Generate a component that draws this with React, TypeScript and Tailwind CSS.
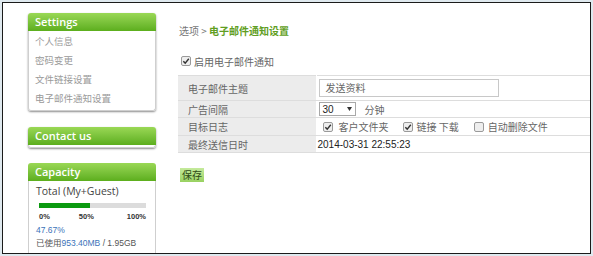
import React from "react";

const cjk = { fontFamily: '"Noto Sans CJK SC", "Liberation Sans", sans-serif' };
const arial = { fontFamily: '"Liberation Sans", "Noto Sans CJK SC", sans-serif' };
const head = { fontFamily: '"Open Sans", "Liberation Sans", sans-serif' };

function Box({ checked }: { checked: boolean }) {
  return (
    <svg width="10" height="10" viewBox="0 0 10 10" className="shrink-0">
      <rect x="0.5" y="0.5" width="9" height="9" rx="1.5" fill="#eeeeee" stroke="#9a9a9a" />
      {checked && <path d="M2.3 5.2 L4.2 7.1 L7.8 2.8" fill="none" stroke="#333" strokeWidth="1.4" />}
    </svg>
  );
}

function Header({ title }: { title: string }) {
  return (
    <div
      className="h-[18px] rounded-t-[3px] bg-gradient-to-b from-[#9ad855] to-[#5cae1c] text-white font-semibold text-[11px] leading-[18px] pl-[7px]"
      style={head}
    >
      {title}
    </div>
  );
}

export default function App() {
  return (
    <div className="w-[593px] h-[256px] bg-[#dfe9ef] p-[2px]">
      <div className="h-full border border-[#1b1b1b] bg-white flex overflow-hidden">
        <aside className="w-[128px] ml-[25px] mt-[10px] flex flex-col shrink-0">
          <div className="rounded-[3px] shadow-[0_1px_2px_rgba(0,0,0,0.45)]">
            <Header title="Settings" />
            <div className="border-x border-b border-[#cfcfcf] rounded-b-[3px] pt-px pb-[2px] bg-white" style={cjk}>
              {["个人信息", "密码变更", "文件链接设置", "电子邮件通知设置"].map((t) => (
                <div key={t} className="h-[19px] leading-[19px] pl-[6px] text-[9.5px] text-[#9a9a9a]">
                  {t}
                </div>
              ))}
            </div>
          </div>
          <div className="mt-[16px] rounded-[3px] shadow-[0_1px_2px_rgba(0,0,0,0.45)]">
            <Header title="Contact us" />
            <div className="h-[3px] border-x border-b border-[#cfcfcf] rounded-b-[3px] bg-white" />
          </div>
          <div className="mt-[15px] flex-1 flex flex-col">
            <Header title="Capacity" />
            <div className="flex-1 border-x border-[#cfcfcf] bg-white pl-[7px]">
              <div className="pt-[3px] leading-[14px] text-[10.5px] text-[#444] font-medium" style={head}>
                Total (My+Guest)
              </div>
              <div className="ml-[3px] mt-[5px] w-[107px] h-[5px] bg-[#dcdcdc] flex">
                <div className="h-full bg-[#0b9a10]" style={{ width: "47.67%" }} />
              </div>
              <div className="ml-[3px] mt-[4px] w-[107px] flex justify-between text-[7.5px] leading-[10px] font-bold text-[#333]" style={arial}>
                <span>0%</span>
                <span className="pr-[4px]">50%</span>
                <span>100%</span>
              </div>
              <div className="mt-[2px] text-[8.5px] leading-[12px] text-[#3b73b9]" style={arial}>
                47.67%
              </div>
              <div className="text-[8.5px] leading-[12px] text-[#555]" style={arial}>
                <span style={cjk}>已使用</span>
                <span className="text-[#3b73b9]">953.40MB</span> / 1.95GB
              </div>
            </div>
          </div>
        </aside>
        <main className="flex-1 ml-[22px] pt-[21px] flex flex-col items-start">
          <div className="text-[10px] leading-[14px] pl-px" style={cjk}>
            <span className="text-[#777]">选项 &gt; </span>
            <span className="text-[#5f9e22] font-bold">电子邮件通知设置</span>
          </div>
          <div className="mt-[16px] h-[14px] flex items-center gap-[3px] pl-[3px] text-[10px] text-[#666]" style={cjk}>
            <Box checked />
            <span>启用电子邮件通知</span>
          </div>
          <table className="mt-[7px] w-full border-collapse text-[10px] text-[#666]" style={cjk}>
            <tbody>
              <tr className="h-[25px]">
                <td className="w-[138px] bg-[#ececec] border-y border-[#dddddd] pl-[10px] border-r border-r-white">电子邮件主题</td>
                <td className="border-y border-[#dddddd] pl-[2px]">
                  <div className="w-[180px] h-[18px] border border-[#c8c8c8] leading-[16px] pl-[6px]">发送资料</div>
                </td>
              </tr>
              <tr className="h-[17px]">
                <td className="bg-[#ececec] border-y border-[#dddddd] pl-[10px] border-r border-r-white">广告间隔</td>
                <td className="border-y border-[#dddddd] pl-[2px]">
                  <div className="flex items-center">
                    <div className="w-[37px] h-[14px] border border-[#a8a8a8] flex items-center justify-between px-[3px] text-[#222]" style={arial}>
                      <span>30</span>
                      <svg width="5" height="4" viewBox="0 0 5 4">
                        <path d="M0 0 L5 0 L2.5 4 Z" fill="#333" />
                      </svg>
                    </div>
                    <span className="ml-[9px]">分钟</span>
                  </div>
                </td>
              </tr>
              <tr className="h-[18px]">
                <td className="bg-[#ececec] border-y border-[#dddddd] pl-[10px] border-r border-r-white">目标日志</td>
                <td className="border-y border-[#dddddd] pl-[6px]">
                  <div className="flex items-center">
                    <Box checked />
                    <span className="ml-[6px]">客户文件夹</span>
                    <span className="ml-[14px]"><Box checked /></span>
                    <span className="ml-[4px]">链接 下载</span>
                    <span className="ml-[15px]"><Box checked={false} /></span>
                    <span className="ml-[4px]">自动删除文件</span>
                  </div>
                </td>
              </tr>
              <tr className="h-[17px]">
                <td className="bg-[#ececec] border-y border-[#dddddd] pl-[10px] border-r border-r-white">最终送信日时</td>
                <td className="border-y border-[#dddddd] pl-px text-[#222]" style={arial}>2014-03-31 22:55:23</td>
              </tr>
            </tbody>
          </table>
          <button
            className="mt-[15px] ml-[2px] h-[14px] px-[2px] bg-gradient-to-b from-[#c5ea9c] to-[#98d160] text-[10px] leading-[14px] text-[#2f4a16]"
            style={cjk}
          >
            保存
          </button>
        </main>
      </div>
    </div>
  );
}
